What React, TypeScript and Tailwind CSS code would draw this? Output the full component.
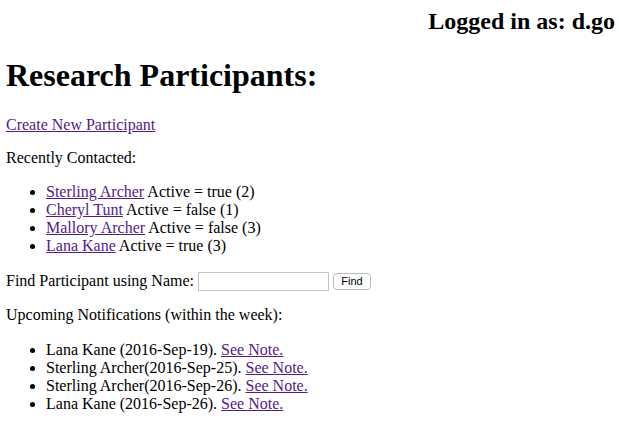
const recent = [
  { name: "Sterling Archer", active: "true", count: 2 },
  { name: "Cheryl Tunt", active: "false", count: 1 },
  { name: "Mallory Archer", active: "false", count: 3 },
  { name: "Lana Kane", active: "true", count: 3 },
];

const notes = [
  { who: "Lana Kane ", date: "2016-Sep-19" },
  { who: "Sterling Archer", date: "2016-Sep-25" },
  { who: "Sterling Archer", date: "2016-Sep-26" },
  { who: "Lana Kane ", date: "2016-Sep-26" },
];

const linkCls = "text-[#551a8b] underline";

export default function App() {
  return (
    <div className="min-h-[437px] bg-white px-[6px] font-['Liberation_Serif',serif] text-[16px] leading-[18px] text-black">
      <div className="-mr-[2px] pt-[7px] text-right text-[24px] font-bold leading-[28px]">Logged in as: d.go</div>

      <h1 className="mt-[22px] text-[32px] font-bold leading-[37px]">Research Participants:</h1>

      <p className="mt-[22px]">
        <a href="#" className={linkCls}>
          Create New Participant
        </a>
      </p>

      <p className="mt-[15px]">Recently Contacted:</p>

      <ul className="mt-[16px] list-disc pl-[40px]">
        {recent.map((r) => (
          <li key={r.name}>
            <a href="#" className={linkCls}>
              {r.name}
            </a>{" "}
            Active = {r.active} ({r.count})
          </li>
        ))}
      </ul>

      <div className="mt-[16px] flex h-[20px] items-center">
        <span>Find Participant using Name:</span>
        <input
          type="text"
          className="ml-[4px] h-[19px] w-[131px] border border-[#c4c4c4] bg-white px-1 outline-none"
        />
        <button
          type="button"
          className="ml-[4px] h-[17px] w-[38px] rounded-[4px] border border-[#b9b9b9] bg-white font-['Liberation_Sans',sans-serif] text-[11px] leading-[15px] text-black"
        >
          Find
        </button>
      </div>

      <p className="mt-[15px]">Upcoming Notifications (within the week):</p>

      <ul className="mt-[17px] list-disc pl-[40px]">
        {notes.map((n, i) => (
          <li key={i}>
            {n.who}({n.date}).{" "}
            <a href="#" className={linkCls}>
              See Note.
            </a>
          </li>
        ))}
      </ul>
    </div>
  );
}
